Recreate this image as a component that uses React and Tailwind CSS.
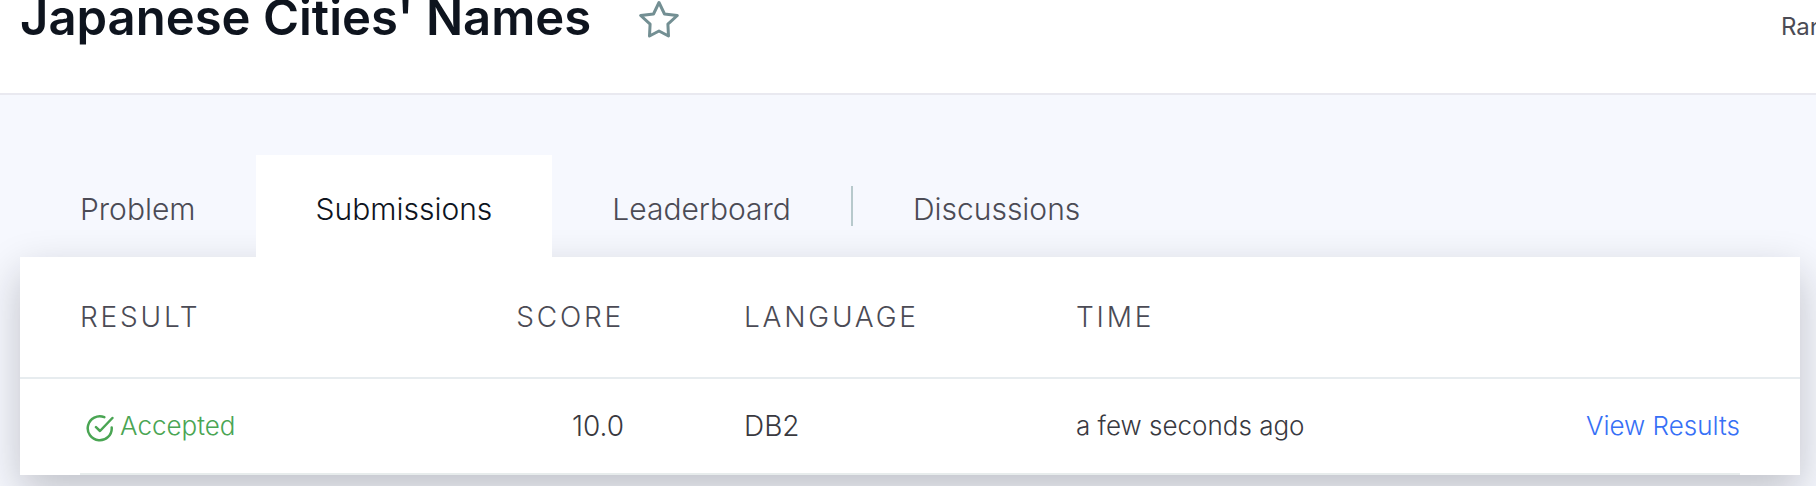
import React from "react";

const tabs = [
  { label: "Problem" },
  { label: "Submissions", active: true },
  { label: "Leaderboard" },
  { label: "Discussions", divided: true },
];

function StarIcon() {
  return (
    <svg className="h-10 w-10" viewBox="0 0 40 40" fill="none" stroke="#738f93" strokeWidth="3" strokeLinejoin="round" aria-hidden="true">
      <path d="M20 2.5 L25.5 14 L38.3 15.5 L28.9 24.2 L29.5 36 L20 31 L10.5 36 L11.1 24.2 L1.7 15.5 L14.5 14 Z" />
    </svg>
  );
}

function AcceptedIcon() {
  return (
    <svg className="mt-1 h-7 w-7" viewBox="0 0 28 28" fill="none" stroke="#4aa553" strokeWidth="2.5" strokeLinecap="round" strokeLinejoin="round" aria-hidden="true">
      <path d="M18.3 3.2 A12 12 0 1 0 25.7 13.5" />
      <path d="M10 13.2 L14 17 L26.4 4" />
    </svg>
  );
}

function Header() {
  return (
    <header className="flex h-[95px] items-start justify-between overflow-hidden border-b-2 border-[#e9e9f0] bg-white pl-5">
      <div className="flex items-start gap-12">
        <h1 className="-mt-3 text-[49px] leading-[60px] font-semibold text-[#0e141e]">Japanese Cities' Names</h1>
        <button type="button" aria-label="Bookmark">
          <StarIcon />
        </button>
      </div>
      <div className="w-[35px] shrink-0 overflow-hidden pt-[11px] text-2xl leading-8 whitespace-nowrap text-[#4b4b55]">Rank</div>
    </header>
  );
}

function Tabs() {
  return (
    <nav className="relative z-10 flex items-stretch pl-5">
      {tabs.map((tab) => (
        <React.Fragment key={tab.label}>
          {tab.divided && <span className="mt-[31px] h-10 w-0.5 bg-[#b7c9cc]" />}
          <a
            href="#"
            className={
              tab.active
                ? "bg-white px-[60px] pt-[34px] pb-7 text-[30px] leading-10 font-light text-[#0e141e]"
                : "px-[60px] pt-[34px] pb-7 text-[30px] leading-10 font-light text-[#4b4b55]"
            }
          >
            {tab.label}
          </a>
        </React.Fragment>
      ))}
    </nav>
  );
}

function Submissions() {
  const head = "h-[122px] border-b-2 border-[#e7ecef] p-0 text-[28px] font-light tracking-widest text-[#4b4b55] uppercase";
  const cell = "flex h-24 items-center border-b-2 border-[#e7ecec]";
  return (
    <section className="mr-4 ml-5 bg-white shadow-[0_16px_40px_rgba(20,20,30,0.24)]">
      <table className="w-full table-fixed border-separate border-spacing-0 text-left text-[26px] leading-9 font-light text-[#39393f]">
        <colgroup>
          <col className="w-[364px]" />
          <col className="w-[300px]" />
          <col className="w-[332px]" />
          <col />
          <col className="w-[300px]" />
        </colgroup>
        <thead>
          <tr>
            <th className={head}><div className="pl-[60px]">Result</div></th>
            <th className={head}><div className="pr-[60px] text-right">Score</div></th>
            <th className={head}><div className="pl-[60px]">Language</div></th>
            <th className={head}><div className="pl-[60px]">Time</div></th>
            <th className={head} aria-label="Actions" />
          </tr>
        </thead>
        <tbody>
          <tr>
            <td className="p-0 pl-[60px]">
              <div className={cell}>
                <span className="flex items-center gap-1.5 pl-1.5 text-[#4aa553]">
                  <AcceptedIcon />
                  Accepted
                </span>
              </div>
            </td>
            <td className="p-0 text-[28px]"><div className={`${cell} justify-end pr-[60px]`}>10.0</div></td>
            <td className="p-0 text-[28px]"><div className={`${cell} pl-[60px]`}>DB2</div></td>
            <td className="p-0"><div className={`${cell} pl-[60px]`}>a few seconds ago</div></td>
            <td className="p-0 pr-[60px]">
              <div className={`${cell} justify-end`}>
                <a href="#" className="whitespace-nowrap text-[#3770f6]">View Results</a>
              </div>
            </td>
          </tr>
        </tbody>
      </table>
    </section>
  );
}

export default function App() {
  return (
    <div className="min-h-screen overflow-hidden bg-[#f6f8fe] font-['Inter',sans-serif]">
      <Header />
      <main className="pt-[60px] pb-3">
        <Tabs />
        <Submissions />
      </main>
    </div>
  );
}
